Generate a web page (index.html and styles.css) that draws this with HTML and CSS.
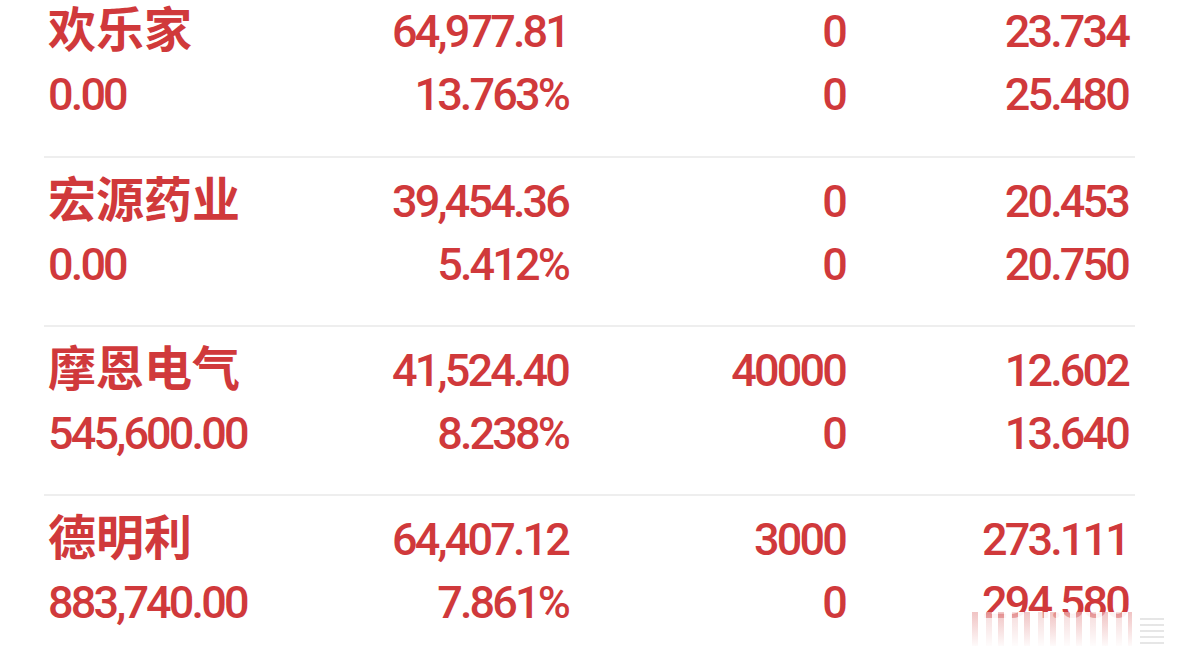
FILE: index.html
```html
<!DOCTYPE html>
<html lang="zh-CN">
<head>
<meta charset="utf-8">
<title>持仓</title>
<link rel="stylesheet" href="styles.css">
</head>
<body>
<div class="list">
  <div class="row">
    <div class="name">欢乐家</div><div class="num">64,977.81</div><div class="num">0</div><div class="num">23.734</div>
    <div class="sub">0.00</div><div class="num">13.763%</div><div class="num">0</div><div class="num">25.480</div>
  </div>
  <div class="row">
    <div class="name">宏源药业</div><div class="num">39,454.36</div><div class="num">0</div><div class="num">20.453</div>
    <div class="sub">0.00</div><div class="num">5.412%</div><div class="num">0</div><div class="num">20.750</div>
  </div>
  <div class="row">
    <div class="name">摩恩电气</div><div class="num">41,524.40</div><div class="num">40000</div><div class="num">12.602</div>
    <div class="sub">545,600.00</div><div class="num">8.238%</div><div class="num">0</div><div class="num">13.640</div>
  </div>
  <div class="row">
    <div class="name">德明利</div><div class="num">64,407.12</div><div class="num">3000</div><div class="num">273.111</div>
    <div class="sub">883,740.00</div><div class="num">7.861%</div><div class="num">0</div><div class="num">294.580</div>
  </div>
</div>
<div class="watermark">
  <div class="smear"></div>
  <div class="lines"></div>
</div>
</body>
</html>
```
FILE: styles.css
```css
html, body {
  margin: 0;
  padding: 0;
  background: #ffffff;
  width: 1179px;
  height: 658px;
  overflow: hidden;
}
body {
  position: relative;
}
.list {
  display: flex;
  flex-direction: column;
  margin-left: 44px;
  width: 1091px;
}
.row {
  display: grid;
  grid-template-columns: 272px 248px 277px 283px;
  grid-auto-rows: 63px;
  align-items: baseline;
  padding: 12px 7px 29px 4px;
  border-top: 2px solid #eeeeee;
  color: #d0393b;
}
.row:first-child {
  border-top: none;
  padding-top: 0;
  padding-bottom: 30px;
}
.num, .sub {
  font-family: Roboto, "Noto Sans", sans-serif;
  font-size: 45px;
  font-weight: 500;
  line-height: 63px;
  letter-spacing: -2.85px;
  white-space: nowrap;
}
.num {
  text-align: right;
}
.sub {
  text-align: left;
}
.name {
  font-family: "Noto Sans CJK SC", sans-serif;
  font-size: 48px;
  font-weight: 700;
  line-height: 48px;
  white-space: nowrap;
}
.watermark {
  position: absolute;
  left: 972px;
  top: 612px;
  width: 200px;
  height: 36px;
}
.smear {
  position: absolute;
  left: 0;
  top: 0;
  width: 160px;
  height: 34px;
  background:
    linear-gradient(to bottom, rgba(255,255,255,0.35), rgba(255,255,255,0.95)),
    repeating-linear-gradient(to right, rgba(214,90,90,0.55) 0 6px, rgba(255,255,255,0.9) 6px 14px, rgba(220,120,120,0.4) 14px 20px, rgba(255,255,255,0.9) 20px 26px);
}
.lines {
  position: absolute;
  left: 168px;
  top: 6px;
  width: 24px;
  height: 26px;
  background: repeating-linear-gradient(to bottom, rgba(205,205,205,0.5) 0 2px, transparent 2px 6px);
}
```
